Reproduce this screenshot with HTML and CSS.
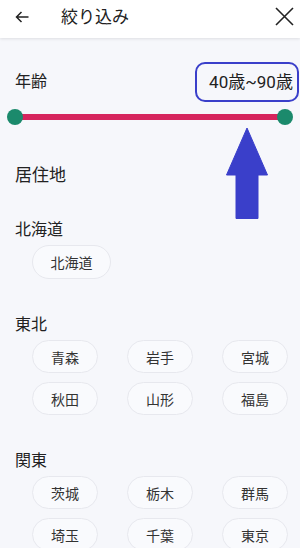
FILE: index.html
```html
<!DOCTYPE html>
<html lang="ja">
<head>
<meta charset="utf-8">
<link rel="stylesheet" href="styles.css">
</head>
<body>
<header class="top">
  <svg class="back" width="14" height="12" viewBox="0 0 14 12"><path d="M13.5 6H1.5M6.5 1L1.5 6L6.5 11" fill="none" stroke="#222" stroke-width="1.5"/></svg>
  <div class="title">絞り込み</div>
  <svg class="close" width="19" height="19" viewBox="0 0 19 19"><path d="M1 1L18 18M18 1L1 18" fill="none" stroke="#222" stroke-width="1.6"/></svg>
</header>
<main class="content">
  <section class="age">
    <div class="age-row">
      <div class="label">年齢</div>
      <div class="value">40歳~90歳</div>
    </div>
    <div class="slider">
      <div class="track"></div>
      <div class="thumb"></div>
      <div class="thumb"></div>
    </div>
    <svg class="arrow" width="42" height="92" viewBox="0 0 42 92"><path d="M21 1L41.5 48H32V91.5H10V48H0.5Z" fill="#3a3fca" stroke="#3a3fca" stroke-width="1" stroke-linejoin="round"/></svg>
  </section>
  <h2 class="section-title">居住地</h2>
  <h3 class="region">北海道</h3>
  <div class="chips">
    <span class="chip wide">北海道</span>
  </div>
  <h3 class="region">東北</h3>
  <div class="chips">
    <span class="chip">青森</span><span class="chip">岩手</span><span class="chip">宮城</span>
    <span class="chip">秋田</span><span class="chip">山形</span><span class="chip">福島</span>
  </div>
  <h3 class="region">関東</h3>
  <div class="chips">
    <span class="chip">茨城</span><span class="chip">栃木</span><span class="chip">群馬</span>
    <span class="chip">埼玉</span><span class="chip">千葉</span><span class="chip">東京</span>
  </div>
</main>
</body>
</html>
```
FILE: styles.css
```css
html, body {
  margin: 0;
  padding: 0;
}
body {
  width: 300px;
  height: 548px;
  overflow: hidden;
  background: #f6f7fb;
  font-family: Roboto, "Noto Sans CJK JP", sans-serif;
  color: #222;
}
.top {
  height: 38px;
  background: #fff;
  box-shadow: 0 1px 3px rgba(0,0,0,0.10);
  display: flex;
  align-items: center;
  position: relative;
  z-index: 1;
}
.back {
  margin-left: 15px;
  margin-top: -5px;
}
.title {
  margin-left: 32px;
  font-size: 17px;
  line-height: 24px;
  margin-top: -4px;
  flex: 1;
}
.close {
  margin-right: 6px;
  margin-top: -5px;
}
.age {
  position: relative;
  padding-top: 24px;
}
.age-row {
  display: flex;
  align-items: center;
  justify-content: space-between;
  padding-left: 15px;
  padding-right: 1px;
}
.label {
  font-size: 16px;
  line-height: 22px;
}
.value {
  font-size: 17px;
  line-height: 20px;
  border: 2px solid #3a3fca;
  border-radius: 10px;
  box-sizing: border-box;
  height: 40px;
  width: 104px;
  display: flex;
  align-items: center;
  justify-content: center;
  padding: 0 0 0 8px;
}
.slider {
  margin: 7px 7px 0 7px;
  height: 16px;
  position: relative;
  display: flex;
  justify-content: space-between;
  align-items: center;
}
.track {
  position: absolute;
  left: 8px;
  right: 8px;
  top: 5px;
  height: 6px;
  background: #d6255d;
}
.thumb {
  width: 16px;
  height: 16px;
  border-radius: 50%;
  background: #1b8a6c;
  position: relative;
}
.arrow {
  position: absolute;
  left: 226px;
  top: 89px;
}
.section-title {
  margin: 38px 0 0 15px;
  font-size: 17px;
  line-height: 24px;
  font-weight: 400;
}
.region {
  margin: 32px 0 0 15px;
  font-size: 16px;
  line-height: 22px;
  font-weight: 400;
}
.chips + .region {
  margin-top: 35px;
}
.chips {
  margin-top: 4px;
  padding-left: 32px;
  display: grid;
  grid-template-columns: 66px 66px 66px;
  column-gap: 29px;
  row-gap: 9px;
}
.chip {
  height: 33px;
  box-sizing: border-box;
  border: 1px solid #e7e8ee;
  border-radius: 17px;
  background: #f9fafd;
  display: flex;
  align-items: center;
  justify-content: center;
  font-size: 14px;
  color: #333;
}
.chip.wide {
  width: 79px;
  height: 34px;
}
```
